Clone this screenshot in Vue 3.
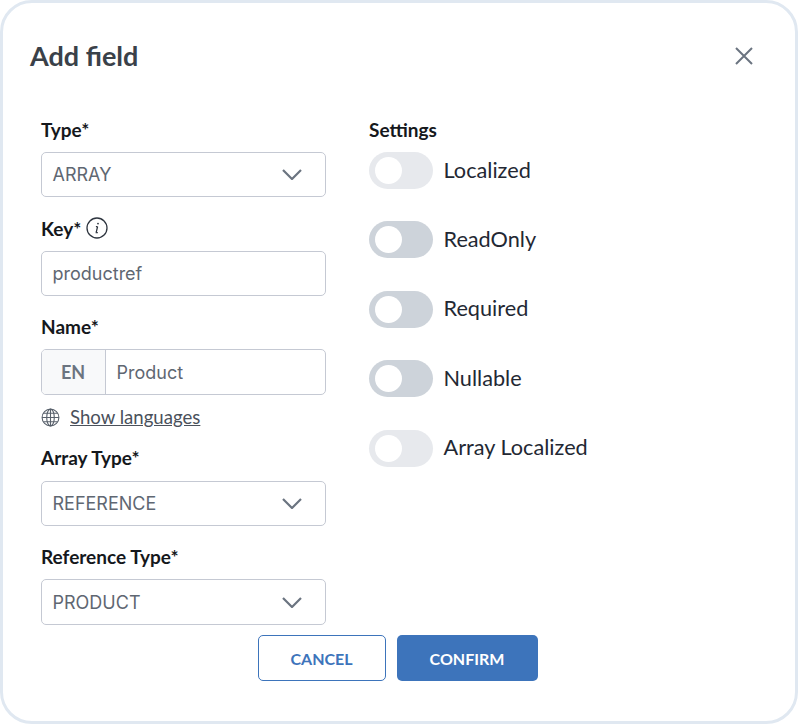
<template>
  <div class="modal">
    <header class="modal-header">
      <h2 class="modal-title">Add field</h2>
      <button class="close-btn" aria-label="Close">
        <svg width="20" height="20" viewBox="0 0 20 20" fill="none" stroke="#6b7480" stroke-width="2">
          <path d="M2 2l16 16M18 2L2 18" />
        </svg>
      </button>
    </header>

    <div class="modal-body">
      <div class="col-left">
        <div class="form-group">
          <label class="field-label">Type*</label>
          <div class="form-control">
            <span>ARRAY</span>
            <svg class="chevron" width="20" height="11" viewBox="0 0 20 11" fill="none" stroke="#6b7480" stroke-width="2.2">
              <path d="M1 1l9 9 9-9" />
            </svg>
          </div>
        </div>

        <div class="form-group key-group">
          <label class="field-label">
            Key*
            <svg class="info-icon" width="22" height="22" viewBox="0 0 22 22" fill="none" stroke="#2f3640" stroke-width="1.3">
              <circle cx="11" cy="11" r="10" />
              <path d="M11.6 9.6l-1.5 6M9.6 15.6h2.2M9.9 9.6h1.7" />
              <circle cx="12" cy="6.6" r=".9" fill="#2f3640" stroke="none" />
            </svg>
          </label>
          <div class="form-control">productref</div>
        </div>

        <div class="form-group">
          <label class="field-label">Name*</label>
          <div class="form-control lang-input">
            <span class="lang-tag">EN</span>
            <span class="lang-value">Product</span>
          </div>
          <div class="show-languages">
            <svg width="19" height="19" viewBox="0 0 19 19" fill="none" stroke="#59616c" stroke-width="1.1">
              <circle cx="9.5" cy="9.5" r="8.4" />
              <ellipse cx="9.5" cy="9.5" rx="3.8" ry="8.4" />
              <path d="M9.5 1.1v16.8M1.1 9.5h16.8M2.3 5.3h14.4M2.3 13.7h14.4" />
            </svg>
            <a class="show-link">Show languages</a>
          </div>
        </div>

        <div class="form-group array-type">
          <label class="field-label">Array Type*</label>
          <div class="form-control">
            <span>REFERENCE</span>
            <svg class="chevron" width="20" height="11" viewBox="0 0 20 11" fill="none" stroke="#6b7480" stroke-width="2.2">
              <path d="M1 1l9 9 9-9" />
            </svg>
          </div>
        </div>

        <div class="form-group">
          <label class="field-label">Reference Type*</label>
          <div class="form-control tall">
            <span>PRODUCT</span>
            <svg class="chevron" width="20" height="11" viewBox="0 0 20 11" fill="none" stroke="#6b7480" stroke-width="2.2">
              <path d="M1 1l9 9 9-9" />
            </svg>
          </div>
        </div>
      </div>

      <div class="col-right">
        <div class="field-label">Settings</div>
        <div class="settings-list">
          <div v-for="item in settings" :key="item.label" class="setting-row">
            <span class="toggle" :class="{ disabled: item.disabled }"><span class="knob"></span></span>
            <span class="setting-label">{{ item.label }}</span>
          </div>
        </div>
      </div>
    </div>

    <footer class="modal-footer">
      <button class="btn btn-outline">CANCEL</button>
      <button class="btn btn-primary">CONFIRM</button>
    </footer>
  </div>
</template>

<script setup>
const settings = [
  { label: 'Localized', disabled: true },
  { label: 'ReadOnly', disabled: false },
  { label: 'Required', disabled: false },
  { label: 'Nullable', disabled: false },
  { label: 'Array Localized', disabled: true },
]
</script>

<style>
html,
body {
  margin: 0;
  background: #fff;
}
</style>

<style scoped>
.modal {
  width: 798px;
  height: 724px;
  box-sizing: border-box;
  border: 3px solid #e0e8f1;
  border-radius: 32px;
  background: #fff;
  font-family: Lato, sans-serif;
  overflow: hidden;
}

.modal-header {
  display: flex;
  justify-content: space-between;
  align-items: center;
  height: 34px;
  padding: 36px 41px 0 27px;
}

.modal-title {
  margin: 0 0 2px;
  font-size: 27px;
  font-weight: 700;
  color: #3a4149;
}

.close-btn {
  display: flex;
  padding: 0;
  border: none;
  background: none;
}

.modal-body {
  display: flex;
  padding: 36px 0 0 38px;
  height: 552px;
  box-sizing: border-box;
  margin-top: 10px;
}

.col-left {
  width: 285px;
  margin-right: 43px;
}

.form-group {
  margin-bottom: 21px;
}

.key-group {
  margin-bottom: 20px;
}

.field-label {
  display: flex;
  align-items: center;
  gap: 5px;
  height: 20px;
  margin-bottom: 13px;
  font-size: 19px;
  font-weight: 700;
  color: #15181c;
}

.info-icon {
  flex: none;
}

.form-control {
  display: flex;
  justify-content: space-between;
  align-items: center;
  height: 45px;
  box-sizing: border-box;
  padding: 0 23px 0 10.5px;
  border: 1px solid #c5c9d3;
  border-radius: 5px;
  background: #fff;
  font-family: Inter, sans-serif;
  font-size: 18px;
  color: #5f6772;
}

.form-control.tall {
  height: 46px;
}

.lang-input {
  justify-content: flex-start;
  height: 46px;
  padding: 0;
  overflow: hidden;
}

.lang-tag {
  display: flex;
  align-items: center;
  justify-content: center;
  flex: none;
  width: 64px;
  height: 100%;
  padding-right: 1px;
  box-sizing: border-box;
  border-right: 1px solid #c5c9d3;
  background: #f8f9fa;
  font-family: Lato, sans-serif;
  font-weight: 700;
  font-size: 18px;
  color: #6b7480;
}

.lang-value {
  padding-left: 10.5px;
}

.show-languages {
  display: flex;
  align-items: center;
  gap: 10px;
  height: 22px;
  margin-top: 11px;
}

.show-link {
  font-size: 18.6px;
  color: #4a515b;
  text-decoration: underline;
}

.form-group:has(.show-languages) {
  margin-bottom: 19px;
}

.array-type .field-label {
  margin-bottom: 14px;
}

.array-type {
  margin-bottom: 20px;
}

.chevron {
  flex: none;
}

.settings-list {
  margin-top: 11px;
}

.setting-row {
  display: flex;
  align-items: center;
  gap: 10.5px;
  height: 37px;
  margin-bottom: 32.4px;
}

.toggle {
  display: flex;
  align-items: center;
  width: 64px;
  height: 37px;
  box-sizing: border-box;
  padding-left: 6px;
  border-radius: 19px;
  background: #cdd3da;
}

.toggle.disabled {
  background: #e7e9ed;
}

.knob {
  width: 27px;
  height: 27px;
  border-radius: 50%;
  background: #fff;
}

.setting-label {
  padding-bottom: 2px;
  font-size: 21.7px;
  color: #232833;
}

.modal-footer {
  display: flex;
  justify-content: center;
  gap: 11px;
  margin-left: -3px;
}

.btn {
  height: 46px;
  box-sizing: border-box;
  border-radius: 5px;
  font-family: Lato, sans-serif;
  font-size: 16px;
  font-weight: 700;
}

.btn-outline {
  width: 128px;
  border: 1px solid #3d74bb;
  background: #fff;
  color: #3d74bb;
}

.btn-primary {
  width: 141px;
  border: none;
  background: #3d74bb;
  color: #fff;
}
</style>
